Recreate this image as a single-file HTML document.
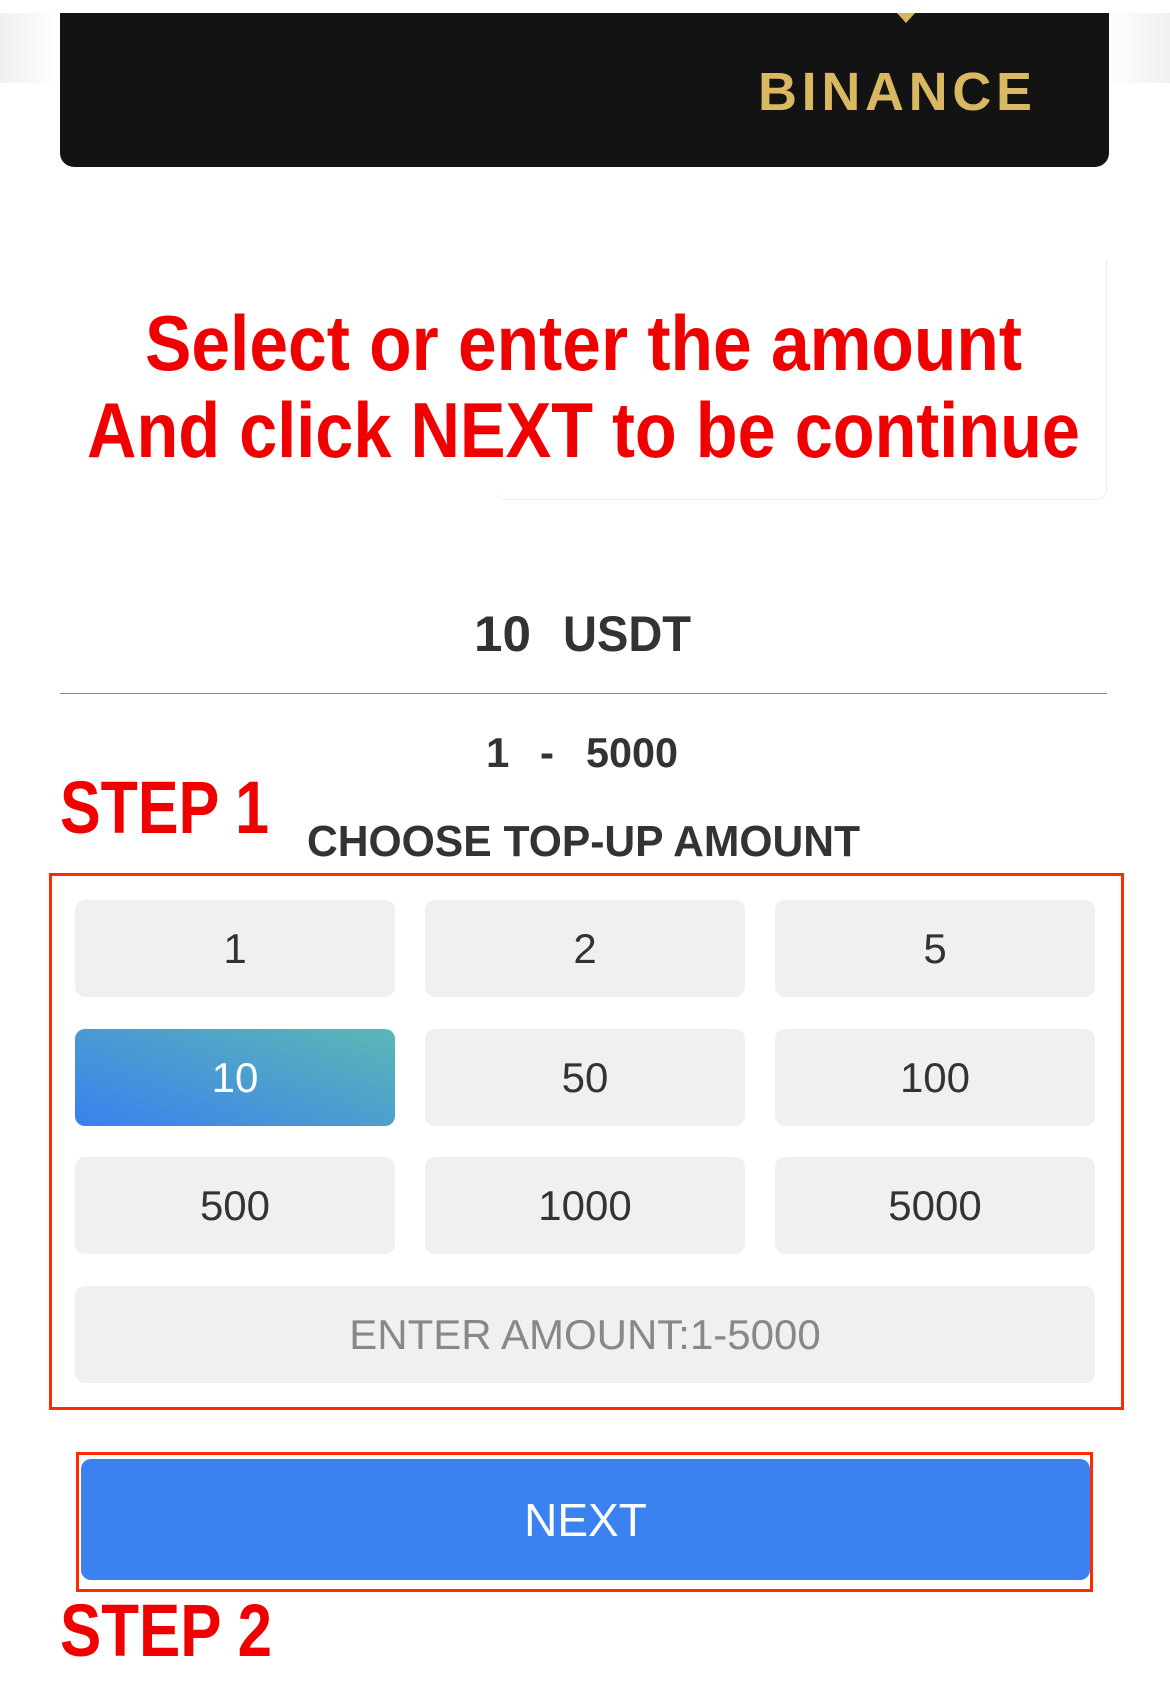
<!DOCTYPE html>
<html><head><meta charset="utf-8"><style>
*{margin:0;padding:0;box-sizing:border-box}
body{width:1170px;height:1705px;background:#fff;position:relative;overflow:hidden;font-family:"Liberation Sans",Arial,sans-serif}
.abs{position:absolute}
.btn{position:absolute;width:320px;height:97px;background:#f0f0f0;border-radius:10px;display:flex;align-items:center;justify-content:center;font-size:42px;color:#333}
</style></head><body>
<div class="abs" style="left:0;top:13px;width:1170px;height:70px;background:linear-gradient(90deg,#ececec 0,#fff 60px,#fff 1105px,#ececec 1170px);opacity:.8"></div>
<div class="abs" style="left:60px;top:13px;width:1049px;height:154px;background:#131313;border-radius:0 0 14px 14px"></div>
<div class="abs" style="left:897px;top:13px;width:0;height:0;border-left:9px solid transparent;border-right:9px solid transparent;border-top:10px solid #d9b45c"></div>
<svg class="abs" style="left:0;top:0" width="1170" height="1705">
<text x="758" y="110" textLength="274" lengthAdjust="spacing" font-family="Liberation Sans" font-weight="bold" font-size="54" fill="#d9b862">BINANCE</text>
<text x="145" y="370" textLength="877" lengthAdjust="spacingAndGlyphs" font-family="Liberation Sans" font-weight="bold" font-size="78" fill="#f00000">Select or enter the amount</text>
<text x="87" y="457" textLength="993" lengthAdjust="spacingAndGlyphs" font-family="Liberation Sans" font-weight="bold" font-size="78" fill="#f00000">And click NEXT to be continue</text>
<g font-family="Liberation Sans" font-weight="bold" fill="#333">
<text x="474" y="651" textLength="57" lengthAdjust="spacingAndGlyphs" font-size="50">10</text>
<text x="563" y="651" textLength="128" lengthAdjust="spacingAndGlyphs" font-size="50">USDT</text>
<text x="486" y="767" font-size="42">1</text>
<text x="540" y="767" font-size="42">-</text>
<text x="586" y="767" textLength="92" lengthAdjust="spacingAndGlyphs" font-size="42">5000</text>
</g>
<text x="60" y="833" textLength="209" lengthAdjust="spacingAndGlyphs" font-family="Liberation Sans" font-weight="bold" font-size="74" fill="#f00000">STEP 1</text>
<text x="307" y="856" textLength="553" lengthAdjust="spacingAndGlyphs" font-family="Liberation Sans" font-weight="bold" font-size="44" fill="#333">CHOOSE TOP-UP AMOUNT</text>
<text x="60" y="1656" textLength="212" lengthAdjust="spacingAndGlyphs" font-family="Liberation Sans" font-weight="bold" font-size="74" fill="#f00000">STEP 2</text>
</svg>
<div class="abs" style="left:495px;top:260px;width:612px;height:240px;border:1px solid #eee;border-left:none;border-top:none;border-radius:0 0 10px 10px"></div>
<div class="abs" style="left:60px;top:693px;width:1047px;height:1px;background:#888"></div>
<div class="abs" style="left:49px;top:873px;width:1075px;height:537px;border:3px solid #ff2a00"></div>
<div class="btn" style="left:75px;top:900px">1</div>
<div class="btn" style="left:425px;top:900px">2</div>
<div class="btn" style="left:775px;top:900px">5</div>
<div class="btn" style="left:75px;top:1029px;background:linear-gradient(20deg,#3a80f0,#5bb8b4);color:#fff">10</div>
<div class="btn" style="left:425px;top:1029px">50</div>
<div class="btn" style="left:775px;top:1029px">100</div>
<div class="btn" style="left:75px;top:1157px">500</div>
<div class="btn" style="left:425px;top:1157px">1000</div>
<div class="btn" style="left:775px;top:1157px">5000</div>
<div class="btn" style="left:75px;top:1286px;width:1020px;color:#888">ENTER AMOUNT:1-5000</div>
<div class="abs" style="left:76px;top:1452px;width:1017px;height:140px;border:3px solid #ff2a00"></div>
<div class="abs" style="left:81px;top:1459px;width:1009px;height:121px;background:#3b82f0;border-radius:10px;display:flex;align-items:center;justify-content:center;color:#fff;font-size:46px">NEXT</div>
</body></html>
